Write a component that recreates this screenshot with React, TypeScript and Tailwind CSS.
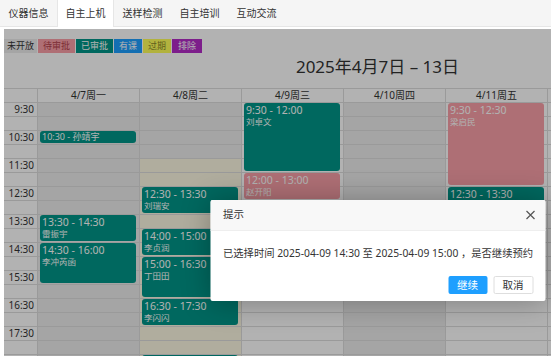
import React from 'react';

type Ev = { s: number; n: number; c: 'teal' | 'pink'; t: string; name?: string; single?: boolean };
type Bg = { s: number; n: number; c: 'gray' | 'yellow' };
type Day = { label: string; bgs: Bg[]; evs: Ev[] };

const ROWS = 24;

const days: Day[] = [
  {
    label: '4/7周一',
    bgs: [{ s: 0, n: ROWS, c: 'gray' }],
    evs: [
      { s: 2, n: 1, c: 'teal', t: '10:30 - 孙靖宇', single: true },
      { s: 8, n: 2, c: 'teal', t: '13:30 - 14:30', name: '雷振宇' },
      { s: 10, n: 3, c: 'teal', t: '14:30 - 16:00', name: '李冲芮函' },
    ],
  },
  {
    label: '4/8周二',
    bgs: [
      { s: 0, n: 4, c: 'gray' },
      { s: 4, n: ROWS - 4, c: 'yellow' },
    ],
    evs: [
      { s: 6, n: 2, c: 'teal', t: '12:30 - 13:30', name: '刘瑞安' },
      { s: 9, n: 2, c: 'teal', t: '14:00 - 15:00', name: '李贞润' },
      { s: 11, n: 3, c: 'teal', t: '15:00 - 16:30', name: '丁田田' },
      { s: 14, n: 2, c: 'teal', t: '16:30 - 17:30', name: '李闪闪' },
      { s: 18, n: 2, c: 'teal', t: '', name: '' },
    ],
  },
  {
    label: '4/9周三',
    bgs: [],
    evs: [
      { s: 0, n: 5, c: 'teal', t: '9:30 - 12:00', name: '刘卓文' },
      { s: 5, n: 2, c: 'pink', t: '12:00 - 13:00', name: '赵开阳' },
    ],
  },
  {
    label: '4/10周四',
    bgs: [{ s: 0, n: ROWS, c: 'gray' }],
    evs: [],
  },
  {
    label: '4/11周五',
    bgs: [],
    evs: [
      { s: 0, n: 6, c: 'pink', t: '9:30 - 12:30', name: '梁启民' },
      { s: 6, n: 2, c: 'teal', t: '12:30 - 13:30', name: '' },
    ],
  },
  { label: '', bgs: [], evs: [] },
  { label: '', bgs: [], evs: [] },
];

const hours = ['9:30', '10:30', '11:30', '12:30', '13:30', '14:30', '15:30', '16:30', '17:30'];

const tabs = ['仪器信息', '自主上机', '送样检测', '自主培训', '互动交流'];

const legend = [
  { t: '未开放', c: 'px-[3px] bg-[#ededed] text-[#333]' },
  { t: '待审批', c: 'px-[5px] bg-[#fba0a8] text-[#b3404c]' },
  { t: '已审批', c: 'px-[5px] bg-[#009688] text-white' },
  { t: '有课', c: 'px-[5px] bg-[#1e9fff] text-white' },
  { t: '过期', c: 'px-[5px] bg-[#ffff5a] text-[#8a8a2a]' },
  { t: '排除', c: 'px-[6px] bg-[#b42cc8] text-white' },
];

function DayColumn({ day }: { day: Day }) {
  return (
    <div className="w-[102px] shrink-0 border-l border-[#ddd]">
      <div className="h-[14px] border-t border-[#ddd] text-center text-[10px] leading-[13px]">{day.label}</div>
      <div className="grid grid-cols-1 grid-rows-[repeat(24,14px)]">
        {day.bgs.map((b, i) => (
          <div
            key={'b' + i}
            className={b.c === 'gray' ? 'bg-[#ededed]' : 'bg-[#fcf8e3]'}
            style={{ gridRow: `${b.s + 1} / span ${b.n}`, gridColumn: 1 }}
          />
        ))}
        {Array.from({ length: ROWS }).map((_, i) => (
          <div key={'l' + i} className="border-t border-[#ddd]" style={{ gridRow: `${i + 1} / span 1`, gridColumn: 1 }} />
        ))}
        {day.evs.map((e, i) => (
          <div
            key={'e' + i}
            className={`mt-[1px] mb-[1px] ml-[2px] mr-[3px] rounded-[3px] overflow-hidden pl-[2px] text-white ${
              e.c === 'teal' ? 'bg-[#009688]' : 'bg-[#f9a0a8]'
            }`}
            style={{ gridRow: `${e.s + 1} / span ${e.n}`, gridColumn: 1 }}
          >
            {e.single ? (
              <div className="text-[9px] leading-[12px] whitespace-nowrap">{e.t}</div>
            ) : e.t ? (
              <div className="pt-[1px]">
                <div className="text-[10.5px] leading-[12px] whitespace-nowrap">{e.t}</div>
                {e.name ? <div className="text-[8.5px] leading-[12px] whitespace-nowrap">{e.name}</div> : null}
              </div>
            ) : null}
          </div>
        ))}
      </div>
    </div>
  );
}

export default function App() {
  return (
    <div className="w-[551px] h-[356px] overflow-hidden bg-white text-[#333] font-['Noto_Sans','Noto_Sans_CJK_SC',sans-serif]">
      <div className="flex h-[27px] bg-[#f5f5f5] border-b border-[#e6e6e6]">
        {tabs.map((t, i) => (
          <div
            key={t}
            className={`w-[57px] shrink-0 text-center text-[10px] leading-[26px] ${
              i === 1 ? 'bg-white h-[27px] border-x border-[#e6e6e6]' : ''
            }`}
          >
            {t}
          </div>
        ))}
      </div>
      <div className="relative ml-[4px] mt-[2px] w-[747px] h-[460px]">
        <div className="flex gap-[1px] pt-[10px]">
          {legend.map((l) => (
            <div key={l.t} className={`h-[14px] text-[9px] leading-[14px] ${l.c}`}>
              {l.t}
            </div>
          ))}
        </div>
        <div className="h-[35px] pt-[2px] text-center text-[17px] leading-[24px] text-[#333]">2025年4月7日 – 13日</div>
        <div className="flex">
          <div className="w-[33px] shrink-0">
            <div className="h-[14px] border-t border-[#ddd]" />
            <div className="grid grid-cols-1 grid-rows-[repeat(24,14px)]">
              {Array.from({ length: ROWS }).map((_, i) => (
                <div key={i} className="border-t border-[#ddd] pr-[3px] text-right text-[10px] leading-[13px]">
                  {i % 2 === 0 && hours[i / 2] ? hours[i / 2] : ''}
                </div>
              ))}
            </div>
          </div>
          {days.map((d, i) => (
            <DayColumn key={i} day={d} />
          ))}
        </div>
        <div className="absolute inset-0 bg-black/30" />
        <div className="absolute left-1/2 -translate-x-1/2 top-[171px] w-[335px] bg-white rounded-[2px] overflow-hidden shadow-[1px_1px_30px_rgba(0,0,0,0.3)]">
          <div className="h-[31px] bg-[#f8f8f8] border-b border-[#eee] flex items-center justify-between pl-[13px] pr-[10px] text-[10.5px] text-[#333]">
            <span>提示</span>
            <svg width="10" height="10" viewBox="0 0 10 10">
              <path d="M1 1 L9 9 M9 1 L1 9" stroke="#555" strokeWidth="1.2" fill="none" />
            </svg>
          </div>
          <div className="pl-[13px] pt-[14px] text-[10.3px] leading-[16px] text-[#333] whitespace-nowrap">
            已选择时间 2025-04-09 14:30 至 2025-04-09 15:00 ，是否继续预约
          </div>
          <div className="flex justify-end gap-[6px] pr-[12px] pt-[15px] pb-[7px]">
            <div className="w-[39px] h-[18px] rounded-[2px] bg-[#1e9fff] text-white text-[10.5px] leading-[18px] text-center">继续</div>
            <div className="w-[40px] h-[18px] rounded-[2px] border border-[#dedede] bg-white text-[#333] text-[10.5px] leading-[16px] text-center">取消</div>
          </div>
        </div>
      </div>
    </div>
  );
}
